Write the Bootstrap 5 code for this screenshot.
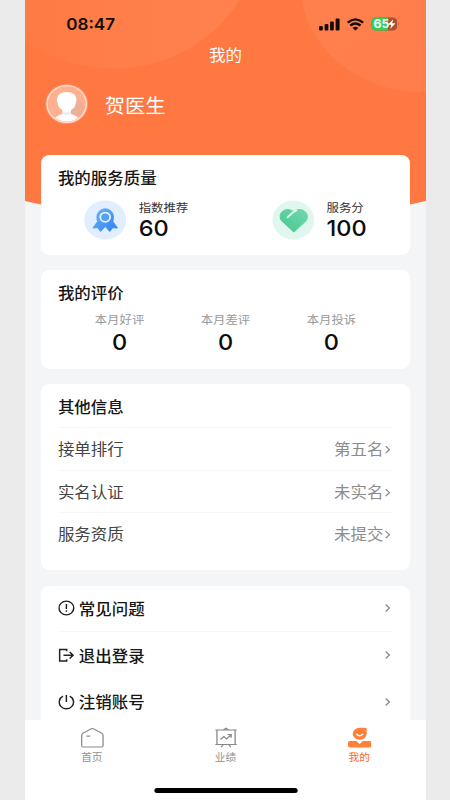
<!DOCTYPE html>
<html lang="zh-CN">
<head>
<meta charset="utf-8">
<meta name="viewport" content="width=device-width, initial-scale=1">
<title>我的</title>
<link href="https://cdn.jsdelivr.net/npm/bootstrap@5.3.0/dist/css/bootstrap.min.css" rel="stylesheet">
<style>
body{background:#ebebeb;font-family:Inter,"Noto Sans CJK SC",sans-serif;color:#161616;overflow:hidden;font-size:15.4px;line-height:20px}
/* 375-unit wide screen stretched to the 401px viewport slot */
.phone{width:375px;height:800px;margin-left:25px;background:#f4f5f7;transform:scaleX(1.0693);transform-origin:0 0}
.backdrop-art{left:0;top:0;width:375px;height:220px}
.statusbar{height:48px;padding:0 24.5px 0 38.5px}
.clock{font-size:16px;font-weight:600;color:#140b07}
.page-title{height:17px;line-height:16px;color:#fff}
.profile{height:90px;padding:0 19px 7px}
.avatar{margin-bottom:5px}
.doctor{font-size:19px;color:#fff;margin-left:15.5px;padding-top:1px}
.panel{border-radius:8px;margin:0 15.4px 15.3px;padding:0 15.4px;background:#fff}
.p-quality{height:99.7px}.p-rating{height:98.7px}.p-info{height:186.5px}.p-menu{height:134.5px;margin-bottom:0;border-radius:8px 8px 0 0}
.panel-head{font-weight:500;padding-top:14px;height:39px}
.info-head{height:43px}
.tiny{font-size:11.6px;line-height:14px;color:#333}
.figure-num{font-size:22px;line-height:26px;font-weight:450;color:#0c0c0c}
.stat-l{padding-left:24.3px;width:200px}
.stat-txt{margin-left:11.2px;padding-top:7px}
.gray-a{color:#999}
.rate-col{width:99.1px}
.zero{font-size:22px;line-height:26px;font-weight:450;color:#0c0c0c;margin-top:2px}
.info-row{height:42.75px;border-top:1px solid #f7f7f7;color:#444}
.info-row>span{padding-top:2px}
.info-row .val{color:#8c8c8c}
.menu-row{height:46.5px;font-weight:500}
.menu-row span{padding-top:3px;margin-left:3.5px}
.menu-row.first-row{border-bottom:1px solid #f7f7f7;height:46px}
.tabs{height:80px;background:#fff;position:relative}
.tab-cell{width:125px;padding-top:7px;font-size:10px;line-height:14px;color:#919191}
.tab-cell span{padding-top:.5px}
.tab-cell.on{color:#fb6a2e}
.homebar{width:134px;height:5px;border-radius:3px;background:#000;left:120.5px;bottom:7.5px}
svg{display:block;flex:none}
.sig-gap{margin-left:6.5px}
</style>
<script src="https://cdn.jsdelivr.net/npm/bootstrap@5.3.0/dist/js/bootstrap.bundle.min.js"></script>
</head>
<body>
<div class="phone position-relative overflow-hidden">
  <svg class="backdrop-art position-absolute" viewBox="0 0 375 220">
    <defs>
      <linearGradient id="c1" x1="0" y1="0" x2="1" y2="0"><stop offset="0" stop-color="#ff7842"/><stop offset="1" stop-color="#ff8350"/></linearGradient>
      <linearGradient id="c2" x1="0" y1="0" x2="1" y2="1"><stop offset="0" stop-color="#ff8150"/><stop offset="1" stop-color="#ff7c48"/></linearGradient>
    </defs>
    <path d="M0 0H375V201Q187 248 0 201Z" fill="#ff7741"/>
    <ellipse cx="83" cy="-64" rx="134" ry="132.500" fill="url(#c1)"/>
    <ellipse cx="374" cy="-14" rx="116" ry="106.500" fill="url(#c2)"/>
  </svg>
  <div class="position-relative">
    <header>
      <div class="statusbar d-flex align-items-center justify-content-between">
        <span class="clock">08:47</span>
        <div class="d-flex align-items-center">
          <svg width="20" height="13" viewBox="0 0 20 13"><g fill="#140b07"><rect x="0" y="8" width="3.500" height="4.500" rx="1"/><rect x="5.200" y="6" width="3.500" height="6.500" rx="1"/><rect x="10.300" y="3.500" width="3.500" height="9" rx="1"/><rect x="15.500" y=".5" width="3.700" height="12" rx="1"/></g></svg>
          <svg class="sig-gap" width="16" height="13" viewBox="0 0 16 13"><g fill="none" stroke="#140b07" stroke-width="2.300"><path d="M.8 4.700Q8-1.900 15.200 4.700"/><path d="M3.200 7.700Q8 3.400 12.800 7.700"/></g><path d="M5.300 9.900Q8 7.700 10.700 9.900L8 12.600Z" fill="#140b07"/></svg>
          <svg class="sig-gap" width="27" height="14" viewBox="0 0 27 14"><defs><clipPath id="bt"><rect x="0" y=".5" width="24" height="13" rx="4"/></clipPath></defs><g clip-path="url(#bt)"><rect width="24" height="14" fill="#a9502e"/><rect width="15.500" height="14" fill="#30cf58"/></g><path d="M25 5Q26.700 7 25 9Z" fill="#b25a37"/><text x="2" y="11.200" font-size="11.500" font-weight="700" fill="#fff" font-family="Inter">65</text><path d="M20.500 2.300L15.300 7.800H18.600L17.500 12L22.500 6.300H19.300Z" fill="#fff"/></svg>
        </div>
      </div>
      <div class="page-title text-center">我的</div>
      <div class="profile d-flex align-items-center">
        <svg class="avatar" width="40" height="42" viewBox="0 0 40 42"><defs><clipPath id="av"><circle cx="20" cy="21" r="17.500"/></clipPath></defs><circle cx="20" cy="21" r="20" fill="#fff" opacity=".22"/><circle cx="20" cy="21" r="18.500" fill="#ffb08f"/><g clip-path="url(#av)"><path d="M27 12L40 27V40H20V30Z" fill="#efae96"/><path d="M5.500 40Q8 33.500 16 31V27C12.800 25.500 11.700 22 11.500 20Q9.800 16 11.800 13.500C13 7.500 27 7.500 28.200 13.500Q30.200 16 28.500 20C28.300 22 27.200 25.500 24 27V31Q32 33.500 34.500 40Z" fill="#fff"/><path d="M16 28Q20 31 24 28V31Q20 33 16 31Z" fill="#ececec"/></g><circle cx="20" cy="21" r="18.400" fill="none" stroke="#ffe0d3" stroke-width="1.200"/></svg>
        <span class="doctor">贺医生</span>
      </div>
    </header>

    <section class="panel p-quality">
      <div class="panel-head">我的服务质量</div>
      <div class="d-flex">
        <div class="stat-l d-flex">
          <svg class="mt-1" width="40" height="42" viewBox="0 0 40 42"><defs><linearGradient id="bl" x1="0" y1="0" x2="1" y2="1"><stop stop-color="#6eb4fa"/><stop offset="1" stop-color="#2e80ed"/></linearGradient></defs><circle cx="20" cy="22" r="19.600" fill="#e0eeff"/><path d="M20 10.800C24.500 10.800 27.800 14.500 27.800 19Q27.800 21.500 27.200 23.500L31.500 30L27 29.800L24.300 33.500L20 28.500L15.700 33.500L13 29.800L8.500 30L12.800 23.500Q12.200 21.500 12.200 19C12.200 14.500 15.500 10.800 20 10.800Z" fill="url(#bl)" stroke="url(#bl)" stroke-width=".8" stroke-linejoin="round"/><circle cx="20" cy="19.200" r="4.600" fill="#549ff5" stroke="#e8f3ff" stroke-width="1.700"/></svg>
          <div class="stat-txt"><div class="tiny">指数推荐</div><div class="figure-num">60</div></div>
        </div>
        <div class="d-flex">
          <svg class="mt-1" width="40" height="42" viewBox="0 0 40 42"><defs><linearGradient id="gr" x1="1" y1="0" x2="0" y2="1"><stop stop-color="#72d8ae"/><stop offset="1" stop-color="#45c78d"/></linearGradient></defs><circle cx="20" cy="22" r="19.600" fill="#e0f7f0"/><path d="M20.500 34L9.300 23C4 16.500 12 8 20 13.500C29 8 36.500 16.500 31.500 23Z" fill="url(#gr)" stroke="url(#gr)" stroke-linejoin="round"/><path d="M14 19.800L19.500 14.500Q21 13 23.500 12.200" fill="none" stroke="#e0f7f0" stroke-width="1.800"/></svg>
          <div class="stat-txt"><div class="tiny">服务分</div><div class="figure-num">100</div></div>
        </div>
      </div>
    </section>

    <section class="panel p-rating">
      <div class="panel-head">我的评价</div>
      <div class="d-flex justify-content-center text-center pt-1">
        <div class="rate-col"><div class="tiny gray-a">本月好评</div><div class="zero">0</div></div>
        <div class="rate-col"><div class="tiny gray-a">本月差评</div><div class="zero">0</div></div>
        <div class="rate-col"><div class="tiny gray-a">本月投诉</div><div class="zero">0</div></div>
      </div>
    </section>

    <section class="panel p-info">
      <div class="panel-head info-head">其他信息</div>
      <div class="info-row d-flex align-items-center justify-content-between"><span>接单排行</span><span class="val d-flex align-items-center">第五名<svg width="9" height="12" viewBox="0 0 9 12"><path d="M2.300 2.200L5.800 5.700L2.300 9.200" fill="none" stroke="#888" stroke-width="1.200"/></svg></span></div>
      <div class="info-row d-flex align-items-center justify-content-between"><span>实名认证</span><span class="val d-flex align-items-center">未实名<svg width="9" height="12" viewBox="0 0 9 12"><path d="M2.300 2.200L5.800 5.700L2.300 9.200" fill="none" stroke="#888" stroke-width="1.200"/></svg></span></div>
      <div class="info-row d-flex align-items-center justify-content-between"><span>服务资质</span><span class="val d-flex align-items-center">未提交<svg width="9" height="12" viewBox="0 0 9 12"><path d="M2.300 2.200L5.800 5.700L2.300 9.200" fill="none" stroke="#888" stroke-width="1.200"/></svg></span></div>
    </section>

    <section class="panel p-menu">
      <div class="menu-row first-row d-flex align-items-center">
        <svg width="16" height="16" viewBox="0 0 16 16" fill="none" stroke="#222" stroke-width="1.400"><circle cx="7.700" cy="8" r="6.900"/><path d="M7.700 4V9M7.700 10.300V11.800"/></svg>
        <span>常见问题</span>
        <svg class="ms-auto" width="9" height="12" viewBox="0 0 9 12"><path d="M2.300 2.500L5.800 6L2.300 9.500" fill="none" stroke="#888" stroke-width="1.200"/></svg>
      </div>
      <div class="menu-row d-flex align-items-center">
        <svg width="16" height="16" viewBox="0 0 16 16" fill="none" stroke="#222" stroke-width="1.400"><path d="M8 4.300V2.500H1.400V14H8V12.200M5 8.300H14M10.800 5L14 8.300L10.800 11.600"/></svg>
        <span>退出登录</span>
        <svg class="ms-auto" width="9" height="12" viewBox="0 0 9 12"><path d="M2.300 2.500L5.800 6L2.300 9.500" fill="none" stroke="#888" stroke-width="1.200"/></svg>
      </div>
      <div class="menu-row d-flex align-items-center">
        <svg width="16" height="16" viewBox="0 0 16 16" fill="none" stroke="#222" stroke-width="1.400"><path d="M4.500 2.200A6.700 6.700 0 1 0 10.900 2.200M7.700 1V8"/></svg>
        <span>注销账号</span>
        <svg class="ms-auto" width="9" height="12" viewBox="0 0 9 12"><path d="M2.300 2.500L5.800 6L2.300 9.500" fill="none" stroke="#888" stroke-width="1.200"/></svg>
      </div>
    </section>

    <nav class="tabs d-flex">
      <div class="tab-cell d-flex flex-column align-items-center">
        <svg width="22" height="22" viewBox="0 0 22 22" fill="none" stroke="#8c8c8c" stroke-width="1.200"><path d="M2.200 6.200L10 1.800Q11 1.300 12 1.800L19.800 6.200Q21 7 21 8.500V18.500Q21 20 19.500 20H2.500Q1 20 1 18.500V8.500Q1 7 2.200 6.200ZM5.500 9.200H9"/></svg>
        <span>首页</span>
      </div>
      <div class="tab-cell d-flex flex-column align-items-center">
        <svg width="22" height="22" viewBox="0 0 22 22" fill="none" stroke="#888" stroke-width="1.200"><path d="M1 3H21M2.500 3V17.500M19.500 3V17.500M1 17.500H21M8.500 3L11 1.300L13.500 3M6.500 20.200L8.500 17.500M15.500 20.200L13.500 17.500M5.800 12.500L9 9.500L11.500 12L15.500 8M12.500 7.500H15.800V10.800"/></svg>
        <span>业绩</span>
      </div>
      <div class="tab-cell on d-flex flex-column align-items-center">
        <svg width="22" height="22" viewBox="0 0 22 22"><path d="M11 .8H16.500Q17.500 .8 17.500 1.800V7A6.500 6 0 1 1 11 .8Z" fill="#ff8038"/><path d="M8 7Q11 10.500 14 7" fill="none" stroke="#fff" stroke-width="1.300"/><path d="M2 14H8L11 17L14 14H20Q22 14 22 16V18.500Q22 20.500 20 20.500H2Q0 20.500 0 18.500V16Q0 14 2 14Z" fill="#ff8038"/></svg>
        <span>我的</span>
      </div>
      <div class="homebar position-absolute"></div>
    </nav>
  </div>
</div>
</body>
</html>
